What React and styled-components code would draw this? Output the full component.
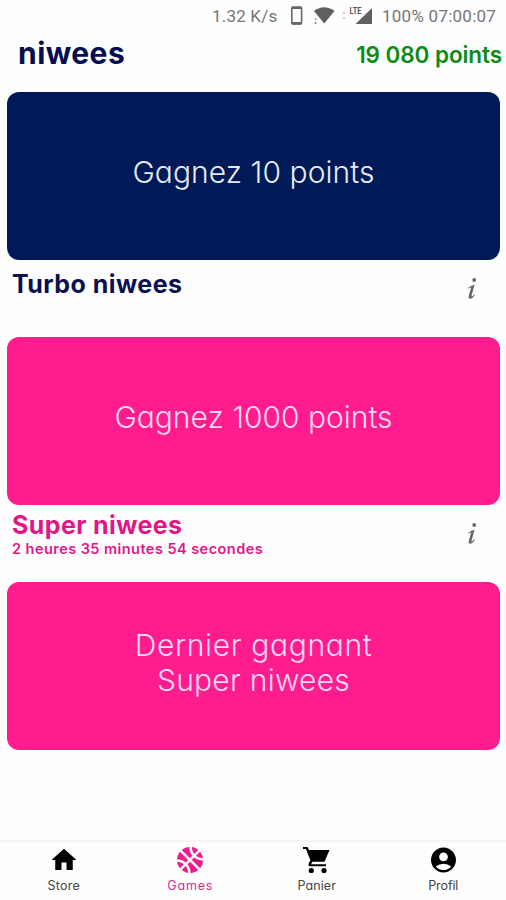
import React from 'react';
import styled, { createGlobalStyle } from 'styled-components';
import { MdHome, MdAccountCircle } from 'react-icons/md';
import { FaBasketballBall } from 'react-icons/fa';

const GlobalStyle = createGlobalStyle`
  * {
    box-sizing: border-box;
  }

  body {
    margin: 0;
    background: #fefefe;
    font-family: Inter, 'Open Sans', sans-serif;
    font-feature-settings: 'cv11', 'ss03';
  }
`;

const Screen = styled.div`
  width: 506px;
  height: 900px;
  display: flex;
  flex-direction: column;
  overflow: hidden;
  white-space: nowrap;
`;

const StatusBar = styled.div`
  height: 32px;
  padding-left: 212px;
  display: flex;
  align-items: center;
  color: #757575;
  font-family: Roboto, sans-serif;
  font-size: 17px;
  line-height: 32px;
`;

const Speed = styled.span`
  width: 77px;
  letter-spacing: 0.2px;
`;

const StatusIcons = styled.svg`
  width: 93px;
  height: 32px;
  flex: none;
`;

const Clock = styled.span`
  letter-spacing: 0.25px;
`;

const Header = styled.header`
  height: 60px;
  padding: 0 4px 0 18px;
  display: flex;
  justify-content: space-between;
  background: #fbfdfe;
`;

const Logo = styled.h1`
  margin: 0;
  color: #060d50;
  font-size: 30px;
  font-weight: 700;
  line-height: 42px;
  letter-spacing: 0.45px;
`;

const Points = styled.span`
  color: #0d8b12;
  font-size: 22.5px;
  font-weight: 600;
  line-height: 46px;
  letter-spacing: -0.08px;
`;

const Games = styled.main`
  flex: 1;
  padding: 0 6px 0 7px;
`;

const Card = styled.div`
  height: 168px;
  border-radius: 12px;
  background: ${(props) => props.$color};
  color: ${(props) => props.$text || '#ffd9f1'};
  display: flex;
  flex-direction: column;
  align-items: center;
  justify-content: center;
  padding-bottom: ${(props) => props.$bottom || 8}px;
  font-size: 30px;
  font-weight: 300;
  line-height: 35px;
`;

const Line = styled.span`
  letter-spacing: ${(props) => props.$spacing}px;
`;

const Caption = styled.div`
  height: 77px;
  padding: ${(props) => props.$top}px 23px 0 5px;
  display: flex;
  justify-content: space-between;
  color: ${(props) => props.$color};
`;

const InfoIcon = styled.svg`
  width: 10px;
  height: 23px;
  margin-top: ${(props) => props.$top}px;
  fill: #666;
`;

const Title = styled.h2`
  margin: 0;
  font-size: 25px;
  font-weight: 700;
  line-height: 30px;
  letter-spacing: ${(props) => props.$spacing}px;
`;

const Countdown = styled.p`
  margin: 0;
  font-size: 14.5px;
  font-weight: 600;
  line-height: 18px;
  letter-spacing: 0.45px;
`;

const TabBar = styled.nav`
  height: 60px;
  border-top: 2px solid #f6f6f6;
  display: grid;
  grid-template-columns: repeat(4, 1fr);
`;

const Tab = styled.a`
  display: flex;
  flex-direction: column;
  align-items: center;
  padding: 3px 0 0 1px;
  color: ${(props) => (props.$active ? '#ee1c8e' : '#000')};
  font-size: 12.5px;
  line-height: 17px;

  > svg {
    height: 30px;
  }

  > span {
    margin-top: 2px;
    color: ${(props) => (props.$active ? '#dc2a90' : '#444')};
    letter-spacing: ${(props) => props.$spacing}px;
  }
`;

const BallIcon = styled(FaBasketballBall)`
  transform: scaleX(-1);
`;

const NAVY = '#001a57';
const PINK = '#ff1c8e';

function Info({ top }) {
  return (
    <InfoIcon $top={top} viewBox="0 0 10 23">
      <circle cx="7.200" cy="3" r="1.900" />
      <path d="M1.200 10.800Q3.500 8.600 7.600 7.700L4.600 18.400Q4.300 19.700 5 19.500Q5.900 19.200 7.300 17.200L8 17.800Q5.500 21.700 3 21.700Q1.100 21.700 1.600 19.600L3.900 11.300Q4.200 10.100 3.200 10.500Q2.300 11 1.600 11.700Z" />
    </InfoIcon>
  );
}

// full basket instead of the outlined one
function Cart() {
  return (
    <svg width="27" height="30" viewBox="0 0 27 30">
      <path d="M0 2h4.500l1.600 3H26.500L21.500 16.800H9.500L8 19.200H23v2H6.500Q4.800 20.600 5.600 18.700L7.400 15.300L2.900 4H0Z" />
      <circle cx="8.300" cy="25.500" r="2.600" />
      <circle cx="21" cy="25.500" r="2.600" />
    </svg>
  );
}

export default function App() {
  return (
    <>
      <GlobalStyle />
      <Screen>
        <StatusBar>
          <Speed>1.32 K/s</Speed>
          <StatusIcons viewBox="0 0 93 32">
            <rect x="2.8" y="7.3" width="9.8" height="16.5" rx="1" fill="none" stroke="#666" strokeWidth="1.6" />
            <path d="M2.8 7.7H12.6M2.8 23.4H12.6" stroke="#666" strokeWidth="2.6" />
            <path d="M25 11Q35 3.5 45.500 11L35.200 23.500Z" fill="#606060" />
            <path d="M26.500 18.500v1.500M26.500 22v2" stroke="#888" strokeWidth="1.5" />
            <path d="M55 12v2M55 17v2" stroke="#bbb" strokeWidth="1.5" />
            <path d="M83 8V24H66.500Z" fill="#606060" />
            <text x="60.500" y="14" fill="#555" fontSize="9" fontWeight="700" textLength="12" lengthAdjust="spacingAndGlyphs">
              LTE
            </text>
          </StatusIcons>
          <Clock>100% 07:00:07</Clock>
        </StatusBar>
        <Header>
          <Logo>niwees</Logo>
          <Points>19 080 points</Points>
        </Header>
        <Games>
          <Card $color={NAVY} $text="#e7ebf5">
            <Line $spacing={0.05}>Gagnez 10 points</Line>
          </Card>
          <Caption $color="#0a1050" $top={9}>
            <Title $spacing={0.45}>Turbo niwees</Title>
            <Info top={8} />
          </Caption>
          <Card $color={PINK}>
            <Line $spacing={0}>Gagnez 1000 points</Line>
          </Card>
          <Caption $color="#e31587" $top={5}>
            <div>
              <Title $spacing={0.4}>Super niwees</Title>
              <Countdown>2 heures 35 minutes 54 secondes</Countdown>
            </div>
            <Info top={12} />
          </Caption>
          <Card $color={PINK} $bottom={6}>
            <Line $spacing={0.65}>Dernier gagnant</Line>
            <Line $spacing={0.25}>Super niwees</Line>
          </Card>
        </Games>
        <TabBar>
          <Tab $spacing={0.2}>
            <MdHome size={30} />
            <span>Store</span>
          </Tab>
          <Tab $active $spacing={0.8}>
            <BallIcon size={26} />
            <span>Games</span>
          </Tab>
          <Tab $spacing={0.1}>
            <Cart />
            <span>Panier</span>
          </Tab>
          <Tab $spacing={-0.1}>
            <MdAccountCircle size={31} />
            <span>Profil</span>
          </Tab>
        </TabBar>
      </Screen>
    </>
  );
}
